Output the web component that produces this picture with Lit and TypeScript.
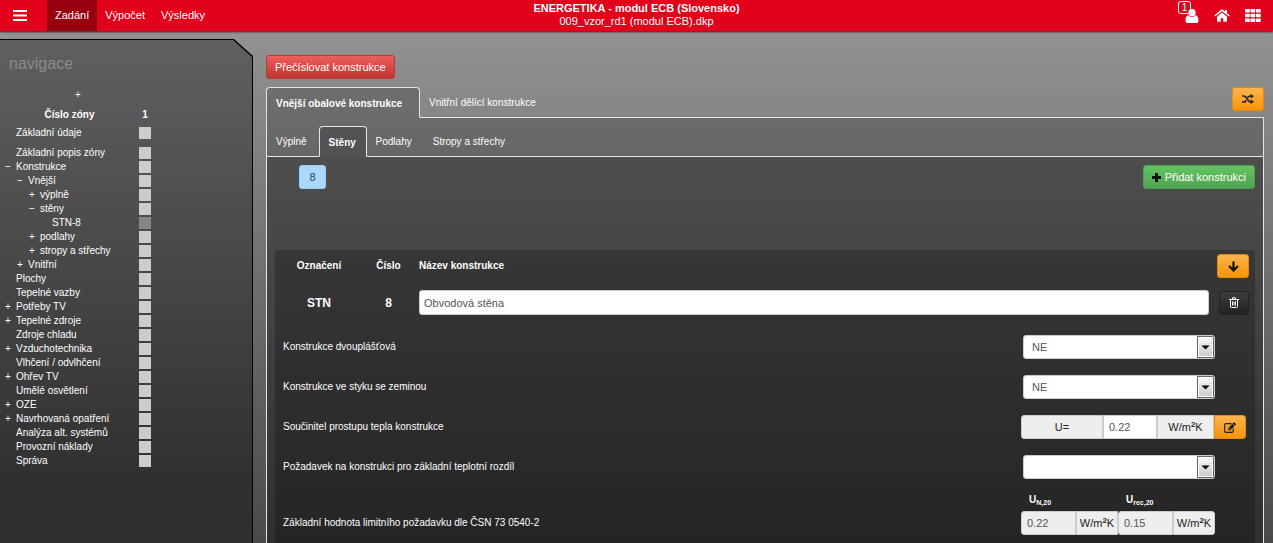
import { LitElement, html, css, svg, nothing } from "lit";
import { customElement } from "lit/decorators.js";
import { classMap } from "lit/directives/class-map.js";

interface NavItem {
  label: string;
  level: number;
  toggle?: "+" | "−";
  current?: boolean;
  spaced?: boolean;
}

const NAV: NavItem[] = [
  { label: "Základní údaje", level: 0, spaced: true },
  { label: "Základní popis zóny", level: 0 },
  { label: "Konstrukce", level: 0, toggle: "−" },
  { label: "Vnější", level: 1, toggle: "−" },
  { label: "výplně", level: 2, toggle: "+" },
  { label: "stěny", level: 2, toggle: "−" },
  { label: "STN-8", level: 3, current: true },
  { label: "podlahy", level: 2, toggle: "+" },
  { label: "stropy a střechy", level: 2, toggle: "+" },
  { label: "Vnitřní", level: 1, toggle: "+" },
  { label: "Plochy", level: 0 },
  { label: "Tepelné vazby", level: 0 },
  { label: "Potřeby TV", level: 0, toggle: "+" },
  { label: "Tepelné zdroje", level: 0, toggle: "+" },
  { label: "Zdroje chladu", level: 0 },
  { label: "Vzduchotechnika", level: 0, toggle: "+" },
  { label: "Vlhčení / odvlhčení", level: 0 },
  { label: "Ohřev TV", level: 0, toggle: "+" },
  { label: "Umělé osvětlení", level: 0 },
  { label: "OZE", level: 0, toggle: "+" },
  { label: "Navrhovaná opatření", level: 0, toggle: "+" },
  { label: "Analýza alt. systémů", level: 0 },
  { label: "Provozní náklady", level: 0 },
  { label: "Správa", level: 0 },
];

const base = css`
  * { box-sizing: border-box; }
  :host {
    display: block;
    font-family: "Liberation Sans", Arial, sans-serif;
    font-size: 10px;
    line-height: 14px;
    color: #fff;
  }
  a { color: inherit; text-decoration: none; }
  button, input, select { font-family: inherit; font-size: 11px; margin: 0; }
  svg { display: block; }
`;

@customElement("app-header")
class AppHeader extends LitElement {
  static styles = [base, css`
    .bar {
      display: grid;
      grid-template-columns: 1fr auto 1fr;
      height: 31px;
      background: #e2001a;
      box-shadow: 0 1px 2px rgba(60, 0, 0, 0.9);
      font-size: 11px;
    }
    .left { display: flex; }
    .menu { width: 47px; padding: 0 0 0 13px; border: 0; background: none; color: #fff; }
    .link { padding: 0 8px; line-height: 31px; }
    .active { background: #98000f; }
    .title { padding-top: 2px; text-align: center; line-height: 13px; }
    .name { margin: 0; font-size: 11px; line-height: 13px; }
    .right { display: flex; justify-content: flex-end; align-items: center; gap: 15px; padding-right: 12px; }
    .user { position: relative; }
    .count {
      position: absolute; right: 8px; top: -8px; width: 13px; height: 13px;
      border: 1px solid #fff; border-radius: 3px;
      font-size: 10px; line-height: 11px; text-align: center;
    }
  `];
  render() {
    return html`<header class="bar">
      <nav class="left">
        <button class="menu" aria-label="Menu">
          <svg width="14" height="11" viewBox="0 0 14 11" fill="#fff"><path d="M0 0h14v2H0zM0 4.5h14v2H0zM0 9h14v2H0z"/></svg>
        </button>
        <a class="link active" href="#">Zadání</a>
        <a class="link" href="#">Výpočet</a>
        <a class="link" href="#">Výsledky</a>
      </nav>
      <div class="title">
        <h1 class="name">ENERGETIKA - modul ECB (Slovensko)</h1>
        <div>009_vzor_rd1 (modul ECB).dkp</div>
      </div>
      <div class="right">
        <a class="user" href="#" aria-label="Uživatel">
          <svg width="14" height="14" viewBox="0 0 14 14" fill="#fff"><circle cx="7" cy="3.8" r="3.7"/><path d="M3.2 6.3C1 6.9.5 9.200.5 11.400.5 13 1.500 14 3 14h8c1.500 0 2.500-1 2.500-2.600 0-2.200-.5-4.500-2.700-5.100C9.800 7.400 8.500 8.100 7 8.100S4.200 7.400 3.200 6.300z"/></svg>
          <span class="count">1</span>
        </a>
        <a href="#" aria-label="Domů">
          <svg width="16" height="13" viewBox="0 0 16 13" fill="#fff"><path d="M8 3.400 13 7.700V12q0 .8-.8.8H9.300V9.200H6.700v3.600H3.800Q3 12.800 3 12V7.700z"/><path d="M.3 6.500 7 .8q1-.8 2 0L11 2.500V1h2v3.300l2.700 2.200-.8 1L8 2.200 1.100 7.500z"/></svg>
        </a>
        <a href="#" aria-label="Moduly">
          <svg width="16" height="13" viewBox="0 0 16 13" fill="#fff">
            ${[0, 4.75, 9.5].map((y) => [0, 5.5, 11].map((x) => svg`<rect x=${x} y=${y} width="4.800" height="3.500" rx="0.700"/>`))}
          </svg>
        </a>
      </div>
    </header>`;
  }
}

@customElement("app-navigation")
class AppNavigation extends LitElement {
  static styles = [base, css`
    :host { display: flex; }
    .edge, .inner { clip-path: polygon(0 0, calc(100% - 19px) 0, 100% 17px, 100% 100%, 0 100%); }
    .edge { flex: 1; display: flex; padding: 1px 1px 0 0; background: #000; }
    .inner { flex: 1; background: linear-gradient(#606060, #303030 440px); }
    .heading { margin: 0; padding: 14px 9px 0; font-size: 16px; line-height: 20px; font-weight: normal; color: #8c8c8c; }
    .tree { margin-top: 14px; border-collapse: collapse; }
    .tree th { height: 24px; padding: 2px 0 0; }
    .tree .add th { height: 14px; padding: 0 0 0 5px; font-weight: normal; }
    .tree td { height: 14px; padding: 0; line-height: 14px; vertical-align: top; }
    .tree .spaced td { height: 20px; }
    .names { width: 139px; }
    .zones { width: 12px; }
    .tree .label { padding-left: 5px; white-space: nowrap; }
    .tree .l1 { padding-left: 17px; }
    .tree .l2 { padding-left: 29px; }
    .tree .l3 { padding-left: 41px; }
    .toggle { display: inline-block; width: 11px; }
    .zone { display: block; width: 12px; height: 12px; margin-top: 1px; background: #ccc; }
    .current { background: #858585; }
  `];
  render() {
    return html`<div class="edge"><nav class="inner">
      <h2 class="heading">navigace</h2>
      <table class="tree">
        <colgroup><col class="names"><col class="zones"></colgroup>
        <thead>
          <tr class="add"><th colspan="2"><a href="#">+</a></th></tr>
          <tr><th>Číslo zóny</th><th>1</th></tr>
        </thead>
        <tbody>
          ${NAV.map((n) => html`<tr class=${classMap({ spaced: !!n.spaced })}>
            <td class=${classMap({ label: true, l1: n.level === 1, l2: n.level === 2, l3: n.level === 3 })}><span class="toggle">${n.toggle ?? nothing}</span><a href="#">${n.label}</a></td>
            <td><a href="#" class=${classMap({ zone: true, current: !!n.current })} aria-label=${n.label + ", zóna 1"}></a></td>
          </tr>`)}
        </tbody>
      </table>
    </nav></div>`;
  }
}

@customElement("construction-card")
class ConstructionCard extends LitElement {
  static styles = [base, css`
    .card { background: rgba(0, 0, 0, 0.22); padding-bottom: 24px; }
    .head { display: grid; grid-template-columns: 88px 51px 1fr 40px; align-items: center; justify-items: center; column-gap: 0; padding-right: 6px; }
    .titles { padding-top: 4px; font-weight: bold; }
    .values { padding-top: 12px; font-size: 12px; font-weight: bold; }
    .wide { justify-self: stretch; padding-left: 5px; }
    .end { justify-self: end; }
    .btn { display: flex; align-items: center; justify-content: center; width: 32px; height: 24px; padding: 0; border: 1px solid #e08c10; border-radius: 3px; background: linear-gradient(#fbb450, #f89406); color: #000; }
    .dark { width: 30px; border-color: #222; background: linear-gradient(#3c3c3c, #222); }
    .text { display: block; width: 100%; height: 25px; padding: 0 4px; border: 1px solid #ccc; border-radius: 3px; background: #fff; color: #555; }
    .row { display: grid; grid-template-columns: 1fr 234px; align-items: center; height: 40px; padding-left: 8px; }
    .first { margin-top: 12px; }
    .select {
      appearance: none; width: 192px; height: 24px; margin-left: 2px; padding: 0 22px 0 8px;
      border: 1px solid #ccc; border-radius: 3px; color: #555;
      background: #fff url('data:image/svg+xml,<svg xmlns="http://www.w3.org/2000/svg" width="17" height="22"><defs><linearGradient id="g" x2="0" y2="1"><stop stop-color="%23f6f6f6"/><stop offset="1" stop-color="%23ccc"/></linearGradient></defs><rect x=".5" y=".5" width="16" height="21" fill="%23fff" stroke="%23666"/><rect x="2" y="2" width="13" height="18" fill="url(%23g)"/><path d="M4.500 9.500h8L8.500 13.500z"/></svg>') no-repeat right 0 top 0;
    }
    .group { display: flex; }
    .addon, .num { height: 24px; border: 1px solid #ccc; font-size: 11px; line-height: 22px; }
    .addon { background: #eee; color: #222; text-align: center; width: 42px; }
    .addon.symbol { width: 82px; border-radius: 3px 0 0 3px; }
    .addon.unit { width: 57px; }
    .num { width: 54px; padding: 0 5px; color: #555; background: #fff; border-radius: 0; }
    .limit { width: 55px; background: #eee; border-radius: 3px 0 0 3px; }
    .joined { border-radius: 0 3px 3px 0; }
    .addon sup { font-size: 8px; line-height: 0; vertical-align: 4px; font-weight: bold; }
    .limits { display: grid; grid-template-columns: 1fr 234px; padding: 6px 0 0 8px; align-items: end; }
    .caption { line-height: 24px; }
    .pairs { display: flex; }
    .pair { display: block; }
    .symbolname { display: block; padding-left: 8px; height: 18px; line-height: 14px; font-weight: bold; }
    .symbolname sub { font-size: 7px; line-height: 0; vertical-align: -2px; }
  `];
  private unit = html`W/m<sup>2</sup>K`;
  render() {
    return html`<section class="card">
      <div class="head titles">
        <span>Označení</span><span>Číslo</span><label class="wide" for="name">Název konstrukce</label>
        <button class="btn end" aria-label="Dolů"><svg width="11" height="11" viewBox="0 0 11 11" fill="none" stroke="#111" stroke-width="2.200"><path d="M5.500.5v8.500M1 5l4.500 4.500L10 5"/></svg></button>
      </div>
      <div class="head values">
        <span>STN</span><span>8</span>
        <div class="wide"><input class="text" id="name" value="Obvodová stěna"></div>
        <button class="btn dark end" aria-label="Smazat"><svg width="10" height="11" viewBox="0 0 10 11" fill="none" stroke="#fff"><path d="M0 2.500h10M3.200 2.300l.5-1.600h2.600l.5 1.600M1.500 2.500v7q0 1 1 1h5q1 0 1-1v-7M3.500 4.500v4M5 4.500v4M6.500 4.500v4"/></svg></button>
      </div>
      <div class="row first"><label for="double">Konstrukce dvouplášťová</label><select class="select" id="double"><option>NE</option><option>ANO</option></select></div>
      <div class="row"><label for="ground">Konstrukce ve styku se zeminou</label><select class="select" id="ground"><option>NE</option><option>ANO</option></select></div>
      <div class="row"><label for="u">Součinitel prostupu tepla konstrukce</label>
        <div class="group"><span class="addon symbol">U=</span><input class="num" id="u" value="0.22"><span class="addon unit">${this.unit}</span><button class="btn joined" aria-label="Upravit"><svg width="12" height="11" viewBox="0 0 12 11" fill="none" stroke="#222"><path stroke-width="1.200" d="M9.300 6.500V8.700q0 1.600-1.600 1.600H2.200Q.6 10.300.6 8.700V3.200q0-1.600 1.600-1.600H7.500"/><path fill="#222" stroke="none" d="M4.300 8.200V5.900L9.600.6q.5-.5 1 0l1.200 1.200q.5.5 0 1L6.500 8.200z"/><path stroke="#f9a630" stroke-width=".7" d="M5.300 6l1.300 1.300M8.700 1.700l2 2"/></svg></button></div>
      </div>
      <div class="row"><label for="req">Požadavek na konstrukci pro základní teplotní rozdíl</label><select class="select" id="req"><option></option></select></div>
      <div class="limits"><span class="caption">Základní hodnota limitního požadavku dle ČSN 73 0540-2</span>
        <div class="pairs">
          <div class="pair"><label class="symbolname" for="un">U<sub>N,20</sub></label><div class="group"><input class="num limit" id="un" value="0.22" readonly><span class="addon">${this.unit}</span></div></div>
          <div class="pair"><label class="symbolname" for="urec">U<sub>rec,20</sub></label><div class="group"><input class="num limit" id="urec" value="0.15" readonly><span class="addon joined">${this.unit}</span></div></div>
        </div>
      </div>
    </section>`;
  }
}

@customElement("app-root")
class AppRoot extends LitElement {
  static styles = [base, css`
    .page { display: flex; flex-direction: column; height: 100vh; overflow: hidden; background: linear-gradient(#929292 32px, #4a4a4a); }
    .header { position: relative; flex: none; }
    .body { flex: 1; min-height: 0; display: grid; grid-template-columns: 253px 1fr; }
    .side { margin-top: 8px; }
    .main { display: flex; flex-direction: column; min-width: 0; padding: 24px 9px 0 13px; }
    .btn { display: flex; align-items: center; justify-content: center; height: 24px; padding: 0 8px; border: 1px solid; border-radius: 3px; color: #fff; }
    .danger { align-self: flex-start; border-color: #b93c36; background: linear-gradient(#ee5f5b, #bd362f); }
    .warning { width: 32px; padding: 0; border-color: #e08c10; background: linear-gradient(#fbb450, #f89406); }
    .success { gap: 4px; border-color: #4ba24b; background: linear-gradient(#62c462, #51a351); }
    .info { width: 27px; border-color: #9ccdf0; background: #aad8fc; color: #345; }
    .tabs { display: flex; height: 31px; margin-top: 8px; }
    .tab { padding: 0 12px 0 9px; line-height: 31px; border-bottom: 1px solid #e6e6e6; white-space: nowrap; }
    .active { min-width: 48px; padding: 0 9px; border: 1px solid #e6e6e6; border-bottom-color: transparent; border-radius: 4px 4px 0 0; background: rgba(0, 0, 0, 0.2); font-weight: bold; }
    .group { min-width: 154px; }
    .rest { flex: 1; display: flex; justify-content: flex-end; border-bottom: 1px solid #e6e6e6; }
    .outer { flex: 1; display: flex; flex-direction: column; border: 1px solid #e6e6e6; border-top: 0; border-bottom: 0; background: rgba(0, 0, 0, 0.2); }
    .inner { flex: 1; padding: 8px; background: linear-gradient(rgba(0, 0, 0, 0.24), rgba(0, 0, 0, 0.2)); }
    .tools { display: flex; justify-content: space-between; padding-left: 24px; margin-bottom: 61px; }
  `];
  render() {
    return html`<div class="page">
      <app-header class="header"></app-header>
      <div class="body">
        <app-navigation class="side"></app-navigation>
        <main class="main">
          <button class="btn danger">Přečíslovat konstrukce</button>
          <nav class="tabs">
            <a class="tab active group" href="#">Vnější obalové konstrukce</a>
            <a class="tab" href="#">Vnitřní dělící konstrukce</a>
            <div class="rest"><button class="btn warning" aria-label="Zamíchat"><svg width="12" height="10" viewBox="0 0 12 10" fill="none" stroke="#222" stroke-width="1.700"><path d="M0 2h2c3 0 3.500 6 6.500 6H9M0 8h2c1 0 1.700-.7 2.300-1.500M5.500 3.500C6.200 2.700 7 2 8.300 2H9"/><path fill="#222" stroke="none" d="M8.700 0v4.500L12 2.200zM8.700 5.500V10L12 7.800z"/></svg></button></div>
          </nav>
          <div class="outer">
            <nav class="tabs">
              <a class="tab" href="#">Výplně</a>
              <a class="tab active" href="#">Stěny</a>
              <a class="tab" href="#">Podlahy</a>
              <a class="tab" href="#">Stropy a střechy</a>
              <div class="rest"></div>
            </nav>
            <div class="inner">
              <div class="tools">
                <button class="btn info">8</button>
                <button class="btn success"><svg width="9" height="9" viewBox="0 0 9 9" fill="#111"><path d="M3 0h3v3h3v3H6v3H3V6H0V3h3z"/></svg>Přidat konstrukci</button>
              </div>
              <construction-card></construction-card>
            </div>
          </div>
        </main>
      </div>
    </div>`;
  }
}
